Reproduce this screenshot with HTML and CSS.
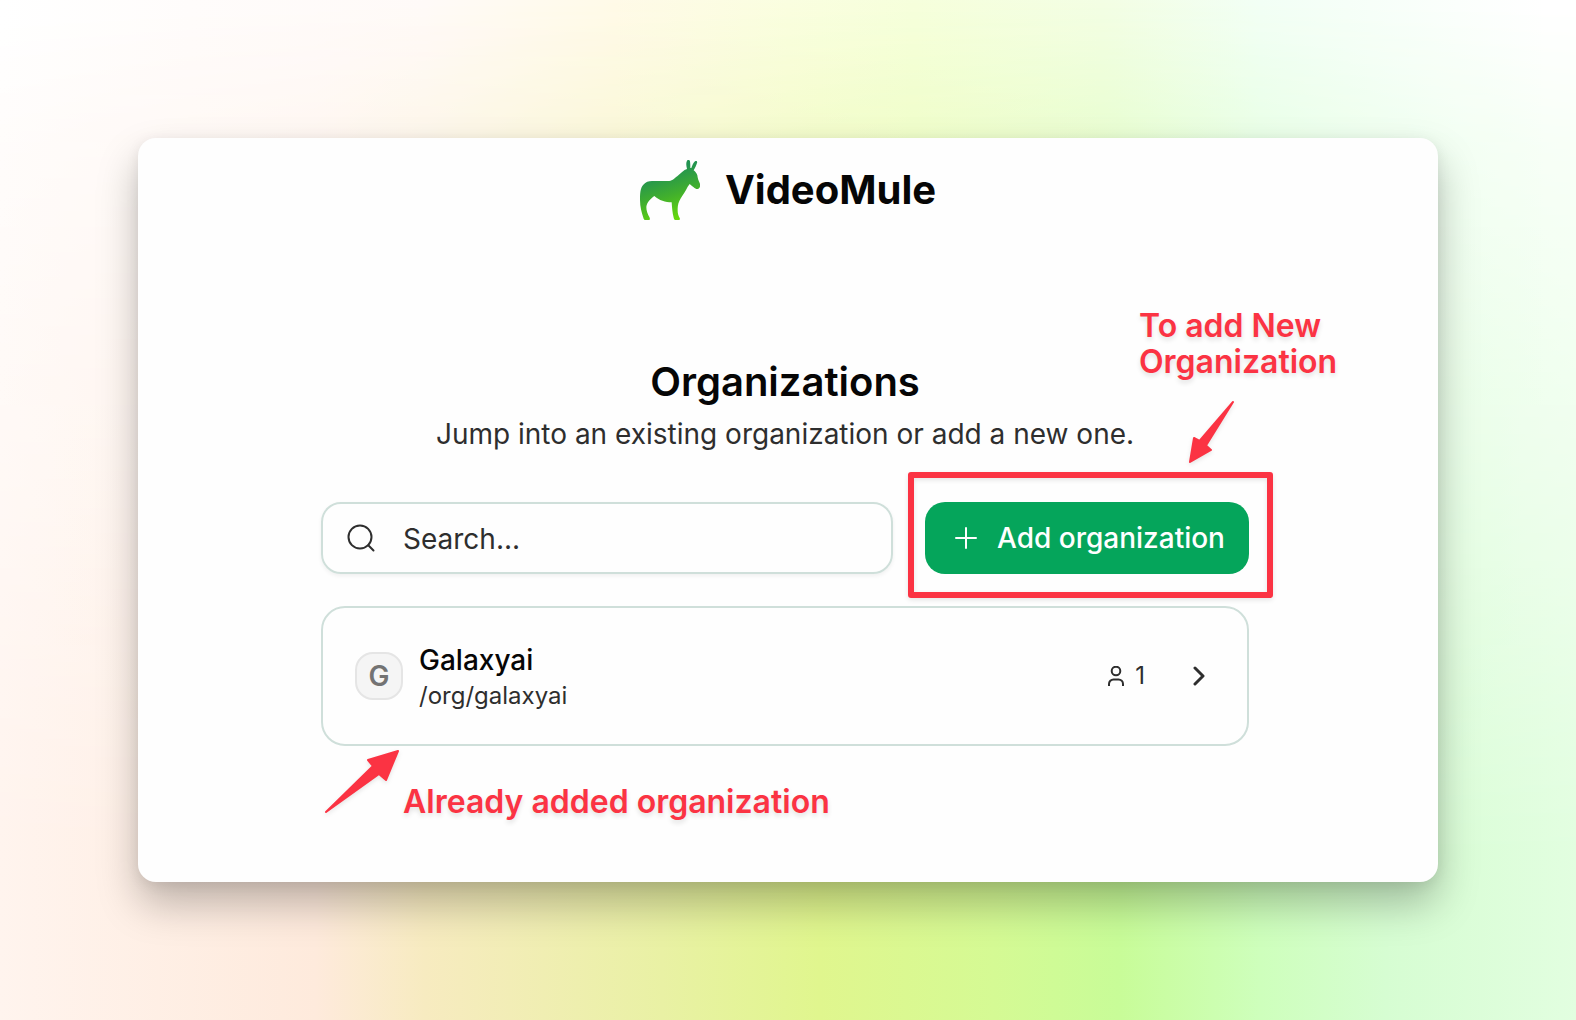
FILE: index.html
```html
<!DOCTYPE html>
<html lang="en">
<head>
<meta charset="utf-8">
<meta name="viewport" content="width=device-width, initial-scale=1">
<title>VideoMule – Organizations</title>
<link rel="stylesheet" href="styles.css">
</head>
<body>
<main class="card">
  <header class="brand">
    <svg class="brand-logo" viewBox="30 30 180 180" aria-hidden="true">
      <defs>
        <linearGradient id="mule" gradientUnits="userSpaceOnUse" x1="95" y1="70" x2="140" y2="208">
          <stop offset="0" stop-color="#229351"/>
          <stop offset="0.5" stop-color="#42b02c"/>
          <stop offset="1" stop-color="#66da0b"/>
        </linearGradient>
      </defs>
      <path fill="url(#mule)" d="M171 57 C168 46 168 37 171 32 C174 28 179 29 180 34 C181 42 181 48 181 54 L184 54 C187 46 190 38 195 34 C199 31 203 34 201 39 C199 46 195 54 191 61 C196 65 200 70 202 76 C203 84 205 92 209 99 C212 107 210 115 204 117 C200 118 195 116 191 112 C187 108 183 106 179 102 C175 107 171 113 168 120 C162 131 153 142 148 153 C143 163 143 173 143 182 C143 190 145 197 149 204 C151 208 149 210 146 210 L137 210 C134 210 132 207 131 203 C127 188 126 172 125 157 C107 157 87 151 73 138 C62 146 50 158 49 171 C49 182 53 192 58 201 C61 207 60 210 56 210 L47 210 C43 210 41 207 40 203 C35 188 30 171 30 150 C30 130 31 113 40 104 C47 96 56 93 66 93 L118 93 C127 93 136 83 145 76 C153 69 161 60 171 57 Z"/>
    </svg>
    <span class="brand-name">VideoMule</span>
  </header>

  <section class="content">
    <h1 class="title">Organizations</h1>
    <p class="subtitle">Jump into an existing organization or add a new one.</p>

    <div class="toolbar">
      <label class="search">
        <svg class="icon-search" viewBox="0 0 28 28" aria-hidden="true">
          <circle cx="13" cy="13" r="11.5"/><path d="M21.3 21.3l5.2 5.2"/>
        </svg>
        <input class="search-input" type="text" placeholder="Search..." aria-label="Search organizations">
      </label>
      <div class="action">
        <button class="add-button" type="button">
          <svg class="icon-plus" viewBox="0 0 22 22" aria-hidden="true"><path d="M11 1v20M1 11h20"/></svg>
          Add organization
        </button>
        <div class="highlight"></div>
        <div class="note note-add">
          <p class="note-text">To add New<br>Organization</p>
          <svg class="arrow-down" viewBox="0 0 48 64" aria-hidden="true">
            <path d="M46 2L12.500 41L7 38L3 62L24 50L19 45.500Z"/>
          </svg>
        </div>
      </div>
    </div>

    <a class="org" href="#galaxyai">
      <span class="avatar">G</span>
      <span class="org-text">
        <span class="org-name">Galaxyai</span>
        <span class="org-path">/org/galaxyai</span>
      </span>
      <span class="members">
        <svg class="icon-user" viewBox="0 0 18 20" aria-hidden="true">
          <circle cx="9" cy="5" r="4.300"/><path d="M2 20v-2a4.500 4.500 0 0 1 4.500-4.500h5a4.500 4.500 0 0 1 4.500 4.500v2"/>
        </svg>
        1
      </span>
      <svg class="icon-chevron" viewBox="0 0 12 20" aria-hidden="true"><path d="M2 2l8 8-8 8"/></svg>
    </a>

    <div class="note note-existing">
      <svg class="arrow-up" viewBox="0 0 80 72" aria-hidden="true">
        <path d="M5 64L52 18L47 12L77 3L65 32L58 26Z"/>
      </svg>
      <p class="note-text">Already added organization</p>
    </div>
  </section>
</main>
</body>
</html>
```

FILE: styles.css
```css
* {
  box-sizing: border-box;
}

body {
  position: relative;
  margin: 0;
  min-height: 100vh;
  padding: 138px;
  font-family: Inter, "Liberation Sans", sans-serif;
  color: #060606;
  background: linear-gradient(90deg, #fff4ee 0%, #feeadc 20%, #f7ebc0 27%, #e9f1a4 42%, #e0f68e 52%, #d5fa94 63%, #c8fc98 71%, #ceffbc 80%, #d6fdd2 88%, #e2fee0 100%);
}

/* Pale colour wash that fades out towards the bottom of the page */
body::before {
  content: "";
  position: absolute;
  inset: 0;
  background: linear-gradient(90deg, #ffffff 0%, #fffcfb 12%, #fffaf8 27%, #fffae8 39%, #fafee0 50%, #f6ffdc 58%, #f3fee4 70%, #f2fff5 80%, #ffffff 98%);
  mask-image: linear-gradient(180deg, #000000 0%, rgba(0, 0, 0, 0.75) 14%, rgba(0, 0, 0, 0.4) 50%, rgba(0, 0, 0, 0) 85%);
}

h1,
p {
  margin: 0;
}

svg {
  display: block;
  flex: none;
  fill: none;
  stroke: currentColor;
  stroke-width: 2;
  stroke-linecap: round;
  stroke-linejoin: round;
}

.card {
  position: relative;
  min-height: calc(100vh - 276px);
  background: #fefefe;
  border-radius: 18px;
  box-shadow: 0 22px 40px rgba(0, 0, 0, 0.25), 0 3px 14px rgba(0, 0, 0, 0.07);
}

.brand {
  display: flex;
  align-items: center;
  justify-content: center;
  gap: 25px;
  height: 104px;
}

.brand-logo {
  width: 60px;
  height: 60px;
  stroke: none;
}

.brand-name {
  font-size: 40px;
  line-height: 48px;
  font-weight: 700;
}

.content {
  padding: 112px 189px 0 183px;
}

.title {
  font-size: 40px;
  line-height: 56px;
  font-weight: 600;
  text-align: center;
}

.subtitle {
  margin-top: 4px;
  font-size: 28px;
  line-height: 40px;
  color: #2e2e2e;
  text-align: center;
}

.toolbar {
  display: flex;
  gap: 32px;
  margin-top: 48px;
}

.search {
  display: flex;
  flex: 1;
  align-items: center;
  gap: 28px;
  min-width: 0;
  height: 72px;
  padding: 0 24px;
  border: 2px solid #cfdfda;
  border-radius: 20px;
  box-shadow: 0 2px 4px rgba(0, 0, 0, 0.06);
  color: #2e2e2e;
}

.icon-search {
  width: 28px;
  height: 28px;
}

.search-input {
  flex: 1;
  min-width: 0;
  padding: 2px 0 0;
  border: 0;
  outline: 0;
  background: none;
  font: inherit;
  font-size: 28px;
  line-height: 40px;
}

.search-input::placeholder {
  color: #2e2e2e;
  opacity: 1;
}

.action {
  position: relative;
}

.add-button {
  display: flex;
  align-items: center;
  gap: 20px;
  width: 324px;
  height: 72px;
  padding: 0 0 0 30px;
  border: 0;
  border-radius: 20px;
  background: #05a55b;
  color: #ffffff;
  font: inherit;
  font-size: 28px;
  font-weight: 500;
  white-space: nowrap;
}

.icon-plus {
  width: 22px;
  height: 22px;
}

.highlight {
  position: absolute;
  inset: -30px -24px -24px -17px;
  border: 6px solid #fb3343;
  border-radius: 3px;
  box-shadow: 0 2px 5px rgba(0, 0, 0, 0.1), inset 0 2px 5px rgba(0, 0, 0, 0.1);
  pointer-events: none;
}

.note {
  color: #fb3343;
}

.note-text {
  font-size: 32px;
  line-height: 36px;
  font-weight: 600;
  white-space: nowrap;
  text-shadow: 0 3px 5px rgba(0, 0, 0, 0.12);
}

.note-add {
  position: absolute;
  left: 214px;
  bottom: 110px;
}

.arrow-down,
.arrow-up {
  fill: currentColor;
  filter: drop-shadow(0 2px 2px rgba(0, 0, 0, 0.1));
}

.arrow-down {
  width: 48px;
  height: 64px;
  margin: 20px 0 0 48px;
}

.arrow-up {
  width: 80px;
  height: 72px;
}

.org {
  display: flex;
  align-items: center;
  height: 140px;
  margin-top: 32px;
  padding: 0 42px 0 32px;
  border: 2px solid #cfdfda;
  border-radius: 24px;
  color: #2e2e2e;
  text-decoration: none;
}

.avatar {
  display: flex;
  align-items: center;
  justify-content: center;
  width: 48px;
  height: 48px;
  border: 2px solid #e5e5e5;
  border-radius: 18px;
  background: #f5f5f5;
  color: #737373;
  font-size: 28px;
  font-weight: 600;
}

.org-text {
  display: flex;
  flex: 1;
  flex-direction: column;
  padding-top: 4px;
  margin-left: 16px;
}

.org-name {
  font-size: 28px;
  line-height: 36px;
  font-weight: 500;
  color: #060606;
}

.org-path {
  font-size: 24px;
  line-height: 36px;
}

.members {
  display: flex;
  align-items: center;
  gap: 10px;
  font-size: 24px;
  line-height: 32px;
}

.icon-user {
  width: 18px;
  height: 20px;
  stroke-linecap: butt;
}

.icon-chevron {
  width: 12px;
  height: 20px;
  margin-left: 48px;
  stroke-width: 3;
}

.note-existing {
  display: flex;
  align-items: flex-end;
  gap: 2px;
  margin-top: 2px;
}
```
